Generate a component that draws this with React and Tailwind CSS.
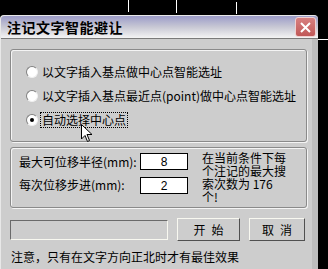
import React from 'react';

const font = { fontFamily: '"Noto Sans CJK SC", "Liberation Sans", sans-serif' };

const Radio = ({ checked, label, focused }) => (
  <div className="flex items-center h-[16px]">
    <span className="w-[12px] h-[12px] rounded-full bg-white border border-t-[#808080] border-l-[#808080] border-b-[#f0f0f0] border-r-[#f0f0f0] flex items-center justify-center shrink-0">
      {checked && <span className="w-[4px] h-[4px] rounded-full bg-black" />}
    </span>
    <span
      className={
        'ml-[3px] px-[1px] leading-[14px] text-[12px] text-black ' +
        (focused ? 'outline outline-1 outline-dotted outline-black' : '')
      }
    >
      {label}
    </span>
  </div>
);

const App = () => {
  return (
    <div className="relative w-[328px] h-[269px] bg-black overflow-hidden" style={font}>
      {/* bits of the CAD drawing behind */}
      <div className="absolute left-[128px] top-0 w-[1px] h-[12px] bg-white" />
      <div className="absolute left-[176px] top-0 w-[1px] h-[13px] bg-white" />
      <div className="absolute left-[236px] top-[2px] w-[1px] h-[12px] bg-white" />
      <div className="absolute left-[318px] top-[39px] w-[10px] h-[1px] bg-white" />

      <div className="absolute left-0 top-[15px] w-[318px] h-[254px] bg-[#cdcdcd] border-l border-t border-[#e8e8e8] rounded-t-[4px] flex flex-col">
        {/* title bar */}
        <div className="h-[23px] flex items-center justify-between pl-[6px] pr-[2px] bg-gradient-to-b from-[#9c9cc8] via-[#c8c8d4] to-[#f4f4f4] border-b border-[#7a7a7a] rounded-t-[4px]">
          <span className="text-[14px] font-bold text-black tracking-[0.5px]">注记文字智能避让</span>
          <span className="w-[21px] h-[20px] rounded-[3px] bg-gradient-to-b from-[#d88080] to-[#c05858] border border-[#f0d0d0] flex items-center justify-center">
            <svg width="13" height="13" viewBox="0 0 13 13">
              <path d="M2 2 L11 11 M11 2 L2 11" stroke="white" strokeWidth="2" />
            </svg>
          </span>
        </div>

        {/* body */}
        <div className="flex-1 flex border-r-[6px] border-r-[#bdbdbd]">
          <div className="flex-1 pl-[9px] pr-[5px] pt-[10px] flex flex-col">
            {/* radio group */}
            <div className="h-[93px] border border-[#8a8a8a] shadow-[inset_1px_1px_0_#f4f4f4,1px_1px_0_#f4f4f4] rounded-[3px] flex flex-col pl-[15px] pt-[14px] gap-[8px]">
              <Radio label="以文字插入基点做中心点智能选址" />
              <Radio label="以文字插入基点最近点(point)做中心点智能选址" />
              <Radio label="自动选择中心点" checked focused />
            </div>

            {/* parameter group */}
            <div className="mt-[5px] h-[61px] border border-[#8a8a8a] shadow-[inset_1px_1px_0_#f4f4f4,1px_1px_0_#f4f4f4] rounded-[3px] flex pl-[8px] pt-[5px]">
              <div className="flex flex-col gap-[6px] w-[121px] text-[12px] text-black">
                <div className="h-[17px] leading-[17px]">最大可位移半径(mm):</div>
                <div className="h-[17px] leading-[17px]">每次位移步进(mm):</div>
              </div>
              <div className="flex flex-col gap-[7px]">
                <div className="w-[48px] h-[17px] bg-white border border-black flex items-center justify-center text-[12px] text-black" style={{ fontFamily: '"Liberation Sans", sans-serif' }}>8</div>
                <div className="w-[48px] h-[17px] bg-white border border-black flex items-center justify-center text-[12px] text-black" style={{ fontFamily: '"Liberation Sans", sans-serif' }}>2</div>
              </div>
              <div className="ml-[14px] -mt-[2px] text-[12px] leading-[13px] text-black whitespace-nowrap">
                <div>在当前条件下每</div>
                <div>个注记的最大搜</div>
                <div>索次数为 176</div>
                <div>个!</div>
              </div>
            </div>

            {/* bottom row */}
            <div className="mt-[10px] flex items-center">
              <div className="w-[158px] h-[20px] bg-[#cdcdcd] border border-t-[#6a6a6a] border-l-[#6a6a6a] border-b-[#f8f8f0] border-r-[#f8f8f0]" />
              <button className="ml-[9px] w-[63px] h-[23px] bg-[#cdcdcd] border border-t-[#f8f8f0] border-l-[#f8f8f0] border-b-[#505050] border-r-[#505050] text-[12px] text-black tracking-[6px] pl-[6px]">开始</button>
              <button className="ml-[9px] w-[56px] h-[23px] bg-[#cdcdcd] border border-t-[#f8f8f0] border-l-[#f8f8f0] border-b-[#505050] border-r-[#505050] text-[12px] text-black tracking-[6px] pl-[6px]">取消</button>
            </div>
            <div className="mt-[9px] pl-[1px] text-[12px] text-black leading-[14px]">注意，只有在文字方向正北时才有最佳效果</div>
          </div>
        </div>
      </div>

      {/* mouse pointer */}
      <svg className="absolute left-[81px] top-[124px]" width="12" height="19" viewBox="0 0 12 19">
        <path d="M0.5 0.5 L0.5 15 L4 11.5 L6.5 17.5 L8.5 16.5 L6 10.5 L11 10.5 Z" fill="white" stroke="black" strokeWidth="1" />
      </svg>
    </div>
  );
};

export default App;
